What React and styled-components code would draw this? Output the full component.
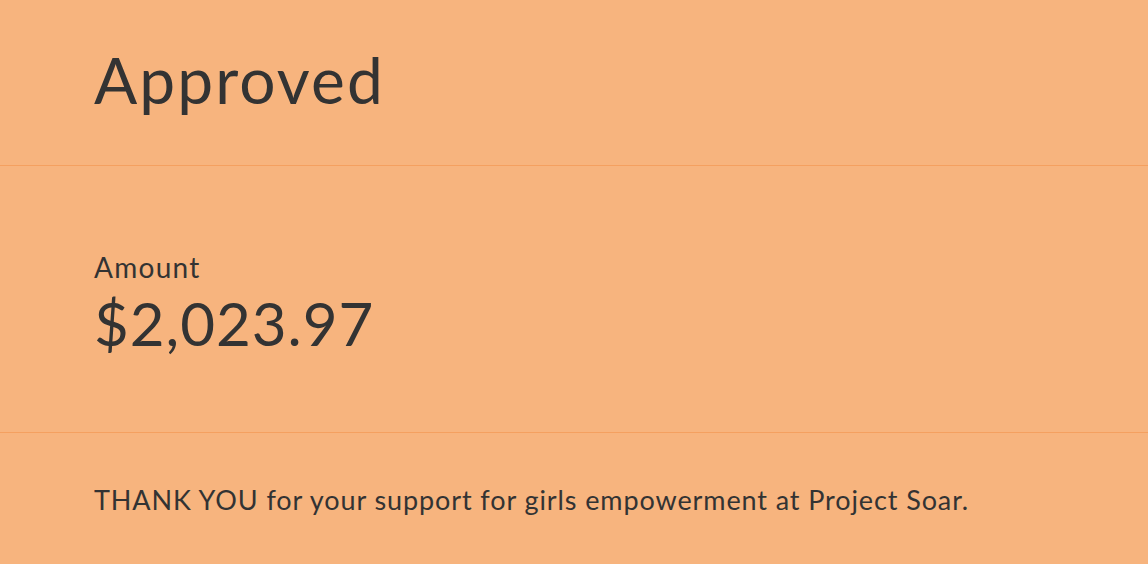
import React from "react";
import styled, { createGlobalStyle } from "styled-components";

const Global = createGlobalStyle`
  html, body { margin: 0; padding: 0; background: #f7b47e; }
  body { font-family: "Lato", "Open Sans", sans-serif; color: #333; }
`;

const Page = styled.div`
  width: 1148px;
  height: 564px;
  background: #f7b47e;
  display: flex;
  flex-direction: column;
  overflow: hidden;
`;

const Section = styled.section`
  height: ${(p) => p.$h}px;
  box-sizing: border-box;
  padding: ${(p) => p.$pad};
  border-bottom: ${(p) => (p.$last ? "none" : "1px solid #f4a060")};
  display: flex;
  flex-direction: column;
`;

const Title = styled.h1`
  margin: 0;
  font-weight: 400;
  font-size: 64px;
  line-height: 64px;
  letter-spacing: 2.1px;
`;

const Label = styled.div`
  font-size: 28px;
  line-height: 30px;
  font-weight: 400;
  letter-spacing: 1.3px;
`;

const Amount = styled.div`
  font-size: 60px;
  line-height: 64px;
  font-weight: 400;
  letter-spacing: 1px;
  margin-top: 9px;
`;

const Note = styled.p`
  margin: 0;
  font-size: 27px;
  line-height: 30px;
  font-weight: 400;
  letter-spacing: 0.9px;
`;

export default function App() {
  return (
    <>
      <Global />
      <Page>
        <Section $h={166} $pad="48px 94px 0">
          <Title>Approved</Title>
        </Section>
        <Section $h={267} $pad="86px 94px 0">
          <Label>Amount</Label>
          <Amount>$2,023.97</Amount>
        </Section>
        <Section $h={131} $pad="52px 94px 0" $last>
          <Note>THANK YOU for your support for girls empowerment at Project Soar.</Note>
        </Section>
      </Page>
    </>
  );
}
